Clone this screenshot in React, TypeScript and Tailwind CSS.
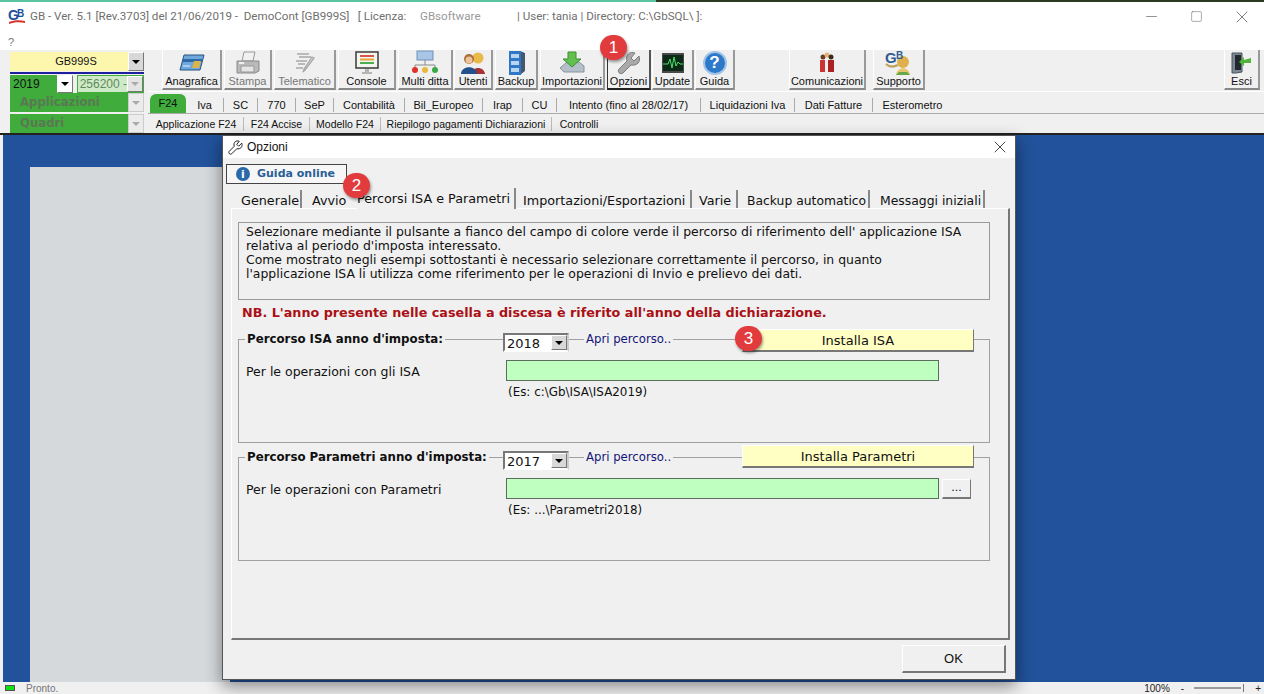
import { X, Minus, Square } from "lucide-react";

const ui = "font-['Liberation_Sans',Arial,sans-serif]";
const dlg = "font-['DejaVu_Sans',Verdana,sans-serif]";

function GbLogo() {
  return (
    <svg width="18" height="17" viewBox="0 0 18 17">
      <text x="0" y="12" fontFamily="Liberation Sans" fontWeight="700" fontSize="14" fill="#1d4f9c">G</text>
      <text x="9" y="9" fontFamily="Liberation Sans" fontWeight="700" fontSize="10" fill="#1d4f9c">B</text>
      <path d="M1 14 C6 12 12 12 17 13 L17 15 C12 14 6 14 1 16 Z" fill="#d8332a" />
    </svg>
  );
}

const icons: Record<string, React.ReactNode> = {
  Anagrafica: (
    <svg width="26" height="20" viewBox="0 0 26 20">
      <path d="M5 2 L25 2 L21 17 L1 17 Z" fill="#6fa8dc" stroke="#27527f" />
      <path d="M4 6 L24 6 L23 9 L3 9 Z" fill="#2f6aa8" />
      <path d="M15 8 L22 8 L20 15 L13 15 Z" fill="#d9b44a" />
      <path d="M4 13 H11" stroke="#e8f0fa" />
    </svg>
  ),
  Stampa: (
    <svg width="26" height="24" viewBox="0 0 26 24">
      <path d="M9 1 H20 L18 10 H7 Z" fill="#f1f1f1" stroke="#9a9a9a" />
      <path d="M2 10 H24 V20 L20 22 H2 Z" fill="#b9b9b9" stroke="#8a8a8a" />
      <path d="M6 15 H19 V21 H6 Z" fill="#e4e4e4" stroke="#999" />
      <path d="M4 12 H9" stroke="#eee" strokeWidth="2" />
    </svg>
  ),
  Telematico: (
    <svg width="24" height="24" viewBox="0 0 24 24" fill="none" stroke="#a8a8a8" strokeWidth="1.3">
      <path d="M4 3 H16 M6 6 H18 M3 10 H14 M5 13 H12 M3 17 H10" />
      <path d="M21 7 L12 19 L10 21 L11 18 L19 6 Z" fill="#ddd" />
    </svg>
  ),
  Console: (
    <svg width="24" height="24" viewBox="0 0 24 24">
      <rect x="1" y="1" width="22" height="16" fill="#f5f5ef" stroke="#3a3a3a" strokeWidth="1.5" />
      <path d="M5 5 H19" stroke="#d9534f" strokeWidth="2" />
      <path d="M5 8.5 H19" stroke="#e9a23b" strokeWidth="2" />
      <path d="M5 12 H19" stroke="#4caf50" strokeWidth="2" />
      <path d="M10 18 H14 V21 H10 Z M7 21 H17 V23 H7 Z" fill="#b5b5b5" />
    </svg>
  ),
  "Multi ditta": (
    <svg width="30" height="26" viewBox="0 0 30 26">
      <rect x="7" y="1" width="16" height="9" fill="#a9c6e8" stroke="#6f8fb5" />
      <path d="M15 10 V15 M5 20 V15 H25 V20" stroke="#8a8a8a" fill="none" />
      <circle cx="5" cy="20" r="3" fill="#e0302a" />
      <circle cx="15" cy="20" r="3" fill="#e8b93a" />
      <circle cx="25" cy="20" r="3" fill="#39a845" />
    </svg>
  ),
  Utenti: (
    <svg width="26" height="24" viewBox="0 0 26 24">
      <circle cx="18" cy="7" r="5.5" fill="#e9b949" />
      <path d="M12 23 C12 15 24 15 25 23 Z" fill="#a83232" />
      <circle cx="9" cy="8" r="5" fill="#a86f3d" />
      <circle cx="9" cy="9" r="3.5" fill="#eec39a" />
      <path d="M1 23 C1 14 17 14 17 23 Z" fill="#24508c" />
    </svg>
  ),
  Backup: (
    <svg width="22" height="26" viewBox="0 0 22 26">
      <path d="M4 1 H15 L20 3 V21 L15 25 H4 Z" fill="#47586e" />
      <rect x="4" y="1" width="12" height="24" fill="#2e78c7" />
      <rect x="6" y="4" width="8" height="4" fill="#b8d4ef" />
      <rect x="6" y="11" width="8" height="4" fill="#b8d4ef" />
      <rect x="6" y="18" width="8" height="4" fill="#b8d4ef" />
    </svg>
  ),
  Importazioni: (
    <svg width="26" height="24" viewBox="0 0 26 24">
      <path d="M1 17 L8 11 H20 L25 15 V21 H5 Z" fill="#b4bfca" stroke="#87929d" />
      <path d="M9 1 H17 V8 H22 L13 16 L4 8 H9 Z" fill="#63c04f" stroke="#3c8e32" />
    </svg>
  ),
  Opzioni: (
    <svg width="24" height="24" viewBox="0 0 24 24">
      <path d="M22 5 L17 10 L14 7 L18 2 C13 0 8 4 10 10 L2 18 C0 21 3 24 6 22 L14 14 C20 15 24 11 22 5 Z" fill="#a9a9a9" stroke="#7c7c7c" />
    </svg>
  ),
  Update: (
    <svg width="24" height="22" viewBox="0 0 24 22">
      <rect x="1" y="1" width="22" height="20" fill="#4a4a4a" />
      <rect x="2" y="3" width="20" height="16" fill="#0d2a16" />
      <path d="M2 12 H7 L9 7 L11 16 L13 5 L15 14 L17 10 L19 12 H22" fill="none" stroke="#47e26a" />
    </svg>
  ),
  Guida: (
    <div className="w-[24px] h-[24px] rounded-full bg-[#2c78c9] border-2 border-[#9ec3e8] flex items-center justify-center text-white font-bold text-[17px] leading-none">?</div>
  ),
  Comunicazioni: (
    <svg width="18" height="22" viewBox="0 0 18 22">
      <circle cx="5" cy="5" r="2.5" fill="#6b3a22" />
      <circle cx="9" cy="3" r="2.5" fill="#e3b26f" />
      <circle cx="13" cy="5" r="2.5" fill="#3b2a1d" />
      <path d="M2 8 H8 V20 H2 Z" fill="#c33" />
      <path d="M7 6 H11 V20 H7 Z" fill="#f0f0f0" />
      <path d="M10 8 H16 V20 H10 Z" fill="#a22" />
    </svg>
  ),
  Supporto: (
    <svg width="28" height="25" viewBox="0 0 28 25">
      <path d="M1 14 C5 18 9 17 13 15" stroke="#b9a25a" strokeWidth="2" fill="none" />
      <circle cx="18" cy="12" r="6" fill="#e0b04d" />
      <path d="M11 25 C12 16 24 16 25 25 Z" fill="#e7c66b" />
      <path d="M11 25 L14 22 H22 L25 25 Z" fill="#65a84c" />
      <text x="0" y="13" fontFamily="Liberation Sans" fontWeight="700" fontSize="15" fill="#2e5c93">G</text>
      <text x="11" y="9" fontFamily="Liberation Sans" fontWeight="700" fontSize="10" fill="#2e5c93">B</text>
    </svg>
  ),
  Esci: (
    <svg width="21" height="22" viewBox="0 0 21 22">
      <path d="M1 1 H11 V20 L5 21 H1 Z" fill="#7c8794" stroke="#4a5560" />
      <rect x="4" y="3" width="6" height="15" fill="#22282d" />
      <path d="M20 6 L20 11 L13 11 L13 14 L8 10 L13 5 L13 8 Z" fill="#53b43c" />
    </svg>
  ),
};

const tools = [
  { label: "Anagrafica", cls: "w-[60px] ml-[14px]" },
  { label: "Stampa", cls: "w-[48px] ml-[2px] text-[#777]" },
  { label: "Telematico", cls: "w-[62px] ml-[2px] text-[#777]" },
  { label: "Console", cls: "w-[58px] ml-[2px]" },
  { label: "Multi ditta", cls: "w-[55px] ml-[2px]" },
  { label: "Utenti", cls: "w-[39px] ml-[1px]" },
  { label: "Backup", cls: "w-[43px] ml-[2px]" },
  { label: "Importazioni", cls: "w-[65px] ml-[2px]" },
  { label: "Opzioni", cls: "w-[44px] ml-[2px] !border-l-[#333] !border-b-[#222] !border-r-[#555]" },
  { label: "Update", cls: "w-[42px] ml-[1px]" },
  { label: "Guida", cls: "w-[40px] ml-[1px]" },
  { label: "Comunicazioni", cls: "w-[77px] ml-[54px]" },
  { label: "Supporto", cls: "w-[52px] ml-[7px]" },
  { label: "Esci", cls: "w-[36px] ml-auto mr-[4px]" },
];

const tabsTop = [
  { t: "Iva", w: "w-[37px]" },
  { t: "SC", w: "w-[34px]" },
  { t: "770", w: "w-[38px]" },
  { t: "SeP", w: "w-[38px]" },
  { t: "Contabilità", w: "w-[71px]" },
  { t: "Bil_Europeo", w: "w-[78px]" },
  { t: "Irap", w: "w-[40px]" },
  { t: "CU", w: "w-[34px]" },
  { t: "Intento (fino al 28/02/17)", w: "w-[144px]" },
  { t: "Liquidazioni Iva", w: "w-[94px]" },
  { t: "Dati Fatture", w: "w-[78px]" },
  { t: "Esterometro", w: "w-[80px]" },
];

const tabsBottom = [
  { t: "Applicazione F24", w: "w-[94px]" },
  { t: "F24 Accise", w: "w-[66px]" },
  { t: "Modello F24", w: "w-[71px]" },
  { t: "Riepilogo pagamenti Dichiarazioni", w: "w-[171px]" },
  { t: "Controlli", w: "w-[55px]" },
];

function ToolButton({ label, cls }: { label: string; cls: string }) {
  return (
    <div className={`h-[40px] flex flex-col items-center bg-[#f0f0f0] border-l border-l-white border-r-2 border-r-[#999] border-b-2 border-b-[#888] ${cls}`}>
      <div className="h-[25px] flex items-center justify-center">{icons[label]}</div>
      <span className="text-[11px] leading-[12px] whitespace-nowrap">{label}</span>
    </div>
  );
}

function ArrowBox({ cls = "w-[16px]", muted = false }: { cls?: string; muted?: boolean }) {
  return (
    <div className={`h-full flex items-center justify-center border border-t-white border-l-white border-r-[#777] border-b-[#777] ${muted ? "bg-[#e4e4e4]" : "bg-[#d8d8d8]"} ${cls}`}>
      <div className={`w-0 h-0 border-l-[4px] border-r-[4px] border-t-[4px] border-l-transparent border-r-transparent ${muted ? "border-t-[#aaa]" : "border-t-black"}`} />
    </div>
  );
}

function GreenCombo({ label }: { label: string }) {
  return (
    <div className={`h-[19px] w-[134px] bg-[#3fac3c] flex items-center justify-between ${dlg}`}>
      <span className="pl-[10px] text-[11.7px] font-bold text-[#5a7853] whitespace-nowrap">{label}</span>
      <div className="h-full w-[16px] bg-[#ececec] border border-[#ccc] flex items-center justify-center">
        <div className="w-0 h-0 border-l-[4px] border-r-[4px] border-t-[4px] border-l-transparent border-r-transparent border-t-[#aaa]" />
      </div>
    </div>
  );
}

function YearCombo({ year }: { year: string }) {
  return (
    <div className="w-[66px] h-[19px] bg-white flex items-center justify-between border-2 border-t-[#777] border-l-[#777] border-r-[#ccc] border-b-white">
      <span className="pl-[2px] pt-[2px] text-[13px] leading-none">{year}</span>
      <ArrowBox cls="w-[16px]" />
    </div>
  );
}

function PathGroup(props: {
  cls: string; headCls: string; legend: string; year: string; button: string;
  legendCls: string; comboCls: string; apriCls: string; fieldCls: string;
  label: string; hint: string; browse?: boolean;
}) {
  return (
    <div className={`border border-[#a0a0a0] h-[104px] ${props.cls}`}>
      <div className={`flex items-start h-[23px] ${props.headCls}`}>
        <div className={`flex w-[264px] pl-[6px] ${props.legendCls}`}>
          <span className="bg-[#f0f0f0] px-[2px] text-[11.8px] leading-[16px] font-bold whitespace-nowrap">{props.legend}</span>
        </div>
        <div className={props.comboCls}><YearCombo year={props.year} /></div>
        <div className={`flex w-[173px] pl-[15px] ${props.apriCls}`}>
          <span className="bg-[#f0f0f0] px-[2px] text-[11.7px] leading-[14px] text-[#14147a] whitespace-nowrap">Apri percorso..</span>
        </div>
        <div className="w-[232px] h-[23px] pt-[1px] bg-[#ffffc4] flex items-center justify-center text-[13px] border border-t-white border-l-white border-r-[#777] border-b-2 border-b-[#777]">
          {props.button}
        </div>
      </div>
      <div className={`flex items-center pl-[7px] ${props.fieldCls}`}>
        <span className="w-[260px] pt-[3px] text-[12.5px] whitespace-nowrap">{props.label}</span>
        <div className="w-[433px] h-[21px] bg-[#bfffbf] border border-[#5d6d5d]" />
        {props.browse && (
          <div className="ml-[3px] w-[29px] h-[20px] flex items-center justify-center text-[11px] border border-t-white border-l-white border-r-[#777] border-b-2 border-b-[#777]">...</div>
        )}
      </div>
      <div className="mt-[3px] pl-[269px] text-[11.9px] leading-[14px]">{props.hint}</div>
    </div>
  );
}

function Badge({ n, cls }: { n: number; cls: string }) {
  return (
    <div className={`absolute w-[27px] h-[25px] rounded-full bg-[#e23b3e] text-white flex items-center justify-center text-[17px] shadow-[1px_2px_3px_rgba(0,0,0,0.4)] ${ui} ${cls}`}>
      {n}
    </div>
  );
}

function Dialog() {
  return (
    <div className={`absolute left-[222px] top-[135px] w-[794px] h-[545px] bg-[#f0f0f0] border border-[#555] shadow-[0_6px_16px_rgba(0,0,0,0.45)] text-[#111] ${dlg}`}>
      <div className="h-[22px] bg-white flex items-center">
        <svg className="ml-[4px]" width="17" height="15" viewBox="0 0 24 24" fill="none" stroke="#222" strokeWidth="1.6">
          <path d="M22 5 L17 10 L14 7 L18 2 C13 0 8 4 10 10 L2 18 C0 21 3 24 6 22 L14 14 C20 15 24 11 22 5 Z" />
        </svg>
        <span className={`ml-[3px] text-[12px] ${ui}`}>Opzioni</span>
        <X className="ml-auto mr-[5px]" size={20} strokeWidth={1} color="#222" />
      </div>
      <div className="ml-[3px] mt-[6px] w-[121px] h-[20px] bg-[#f6f6f6] border border-[#444] flex items-center">
        <div className="ml-[9px] w-[14px] h-[14px] rounded-full bg-[#2a6aa8] text-white text-[11px] font-bold flex items-center justify-center leading-none">i</div>
        <span className="ml-[7px] text-[11px] font-bold text-[#2a5f96] whitespace-nowrap">Guida online</span>
      </div>
      <div className="ml-[9px] mt-[5px] h-[19px] flex items-end text-[12.75px] whitespace-nowrap">
        <div className="w-[70px] h-[18px] pl-[9px] border-r-2 border-r-[#888] leading-[22px]">Generale</div>
        <div className="w-[55px] h-[18px] pl-[10px] leading-[22px]">Avvio</div>
        <div className="w-[159px] h-[21px] -mb-[1px] bg-[#f0f0f0] border-r-2 border-r-[#888] leading-[22px]">Percorsi ISA e Parametri</div>
        <div className="w-[176px] h-[18px] pl-[7px] border-r-2 border-r-[#888] leading-[22px]">Importazioni/Esportazioni</div>
        <div className="w-[46px] h-[18px] pl-[7px] border-r-2 border-r-[#888] leading-[22px]">Varie</div>
        <div className="w-[132px] h-[18px] pl-[9px] border-r-2 border-r-[#888] leading-[22px] text-[12.35px]">Backup automatico</div>
        <div className="w-[115px] h-[18px] pl-[10px] border-r-2 border-r-[#888] leading-[22px] text-[12.4px]">Messaggi iniziali</div>
      </div>
      <div className="ml-[8px] w-[779px] h-[432px] border-t border-l border-t-white border-l-white border-r-2 border-b-2 border-r-[#777] border-b-[#777]">
        <div className="ml-[6px] mt-[13px] w-[752px] h-[78px] border border-[#999] px-[7px] pt-[2px] text-[12.43px] leading-[14px] whitespace-nowrap">
          <p>Selezionare mediante il pulsante a fianco del campo di colore verde il percorso di riferimento dell' applicazione ISA</p>
          <p>relativa al periodo d'imposta interessato.</p>
          <p>Come mostrato negli esempi sottostanti è necessario selezionare correttamente il percorso, in quanto</p>
          <p>l'applicazione ISA li utilizza come riferimento per le operazioni di Invio e prelievo dei dati.</p>
        </div>
        <p className="ml-[10px] mt-[5px] text-[12.75px] leading-[16px] font-bold text-[#aa1016] whitespace-nowrap">
          NB. L'anno presente nelle casella a discesa è riferito all'anno della dichiarazione.
        </p>
        <PathGroup
          cls="ml-[6px] mt-[18px] w-[752px]"
          headCls="-mt-[11px]"
          legend="Percorso ISA anno d'imposta:"
          year="2018"
          button="Installa ISA"
          legendCls="mt-[2px]"
          comboCls="mt-[4px]"
          apriCls="mt-[3px]"
          fieldCls="mt-[8px]"
          label="Per le operazioni con gli ISA"
          hint="(Es: c:\Gb\ISA\ISA2019)"
        />
        <PathGroup
          cls="ml-[6px] mt-[14px] w-[752px]"
          headCls="-mt-[13px]"
          legend="Percorso Parametri anno d'imposta:"
          year="2017"
          button="Installa Parametri"
          legendCls="mt-[4px]"
          comboCls="mt-[6px]"
          apriCls="mt-[5px]"
          fieldCls="mt-[10px]"
          label="Per le operazioni con Parametri"
          hint="(Es: ...\Parametri2018)"
          browse
        />
      </div>
      <div className="mt-[5px] flex justify-end pr-[9px]">
        <div className={`w-[104px] h-[28px] flex items-center justify-center text-[13px] border border-t-white border-l-white border-r-2 border-r-[#777] border-b-2 border-b-[#777] ${ui}`}>OK</div>
      </div>
    </div>
  );
}

export default function App() {
  return (
    <div className={`relative w-[1264px] h-[694px] overflow-hidden flex flex-col bg-[#f0f0f0] text-[#111] ${ui}`}>
      <div className="h-[2px] flex shrink-0">
        <div className="w-[656px] bg-[#5cc3a2]" />
        <div className="flex-1 bg-[#2c3a22]" />
      </div>
      {/* title + menu */}
      <div className="h-[32px] shrink-0 pb-[3px] bg-white flex items-center text-[11.6px] text-[#6f6f6f] whitespace-pre font-['Roboto',sans-serif]">
        <div className="ml-[8px] mr-[4px] flex"><GbLogo /></div>
        <span className="w-[390px]">GB - Ver. 5.1 [Rev.3703] del 21/06/2019 -  DemoCont [GB999S]   [ Licenza:</span>
        <span className="w-[97px] text-[#999]">GBsoftware</span>
        <span>| User: tania | Directory: C:\GbSQL\ ]:</span>
        <Minus className="ml-auto" size={17} strokeWidth={1} color="#666" />
        <Square className="ml-[30px]" size={13} strokeWidth={1} color="#666" />
        <X className="ml-[29px] mr-[12px]" size={20} strokeWidth={1} color="#666" />
      </div>
      <div className="h-[16px] shrink-0 bg-white pl-[8px] text-[11px] leading-[16px] text-[#777]">?</div>

      {/* toolbar area */}
      <div className="h-[85px] shrink-0 flex border-b-2 border-b-[#222]">
        <div className="w-[148px] shrink-0 pl-[10px] pt-[2px]">
          <div className="w-[134px] h-[19px] flex items-center bg-[#fdf7ae] text-[11px]">
            <span className="flex-1 text-center pl-[14px]">GB999S</span>
            <ArrowBox />
          </div>
          <div className="w-[134px] h-[2px] mt-[1px] bg-[#1c1f9e]" />
          <div className="w-[134px] h-[18px] mt-[1px] flex text-[12px]">
            <div className="w-[64px] bg-[#3fac3c] flex items-center justify-between">
              <span className="pl-[3px]">2019</span>
              <ArrowBox cls="w-[16px] bg-white" />
            </div>
            <div className="ml-[4px] flex-1 bg-[#cfeac9] border border-[#3fac3c] flex items-center justify-between text-[#5e8a5a]">
              <span className="pl-[2px] whitespace-nowrap overflow-hidden">256200 -</span>
              <ArrowBox cls="w-[16px] shrink-0" muted />
            </div>
          </div>
          <GreenCombo label="Applicazioni" />
          <div className="mt-[2px]"><GreenCombo label="Quadri" /></div>
        </div>
        <div className="flex-1 flex flex-col">
          <div className="h-[42px] flex border-b border-b-white">
            {tools.map((t) => <ToolButton key={t.label} label={t.label} cls={t.cls} />)}
          </div>
          <div className="h-[21px] mt-[1px] flex items-end text-[11px] border-b border-b-[#aaa]">
            <div className="ml-[2px] w-[36px] h-[19px] bg-[#3fac3c] rounded-t-[6px] flex items-center justify-center">F24</div>
            {tabsTop.map((item, i) => (
              <div key={item.t} className={`h-[14px] mb-[1px] text-center leading-[14px] whitespace-nowrap ${item.w} ${i ? "border-l border-l-[#aaa]" : ""}`}>{item.t}</div>
            ))}
          </div>
          <div className="h-[19px] pl-[1px] flex items-center text-[10.5px]">
            {tabsBottom.map((item, i) => (
              <div key={item.t} className={`h-[14px] text-center leading-[14px] whitespace-nowrap ${item.w} ${i ? "border-l border-l-[#bbb]" : ""}`}>{item.t}</div>
            ))}
          </div>
        </div>
      </div>

      {/* mdi area */}
      <div className="flex-1 ml-[3px] pl-[27px] pt-[32px] bg-[#21529b]">
        <div className="w-[200px] h-full bg-[#d6d9dc]" />
      </div>

      {/* status bar */}
      <div className="h-[12px] shrink-0 flex items-center text-[10px] text-[#777] bg-[#f0f0f0]">
        <div className="ml-[5px] w-[10px] h-[6px] bg-[#12e012] border border-[#555]" />
        <span className="ml-[11px]">Pronto.</span>
        <span className="ml-auto text-[#222]">100%</span>
        <span className="ml-[11px] text-[#222]">-</span>
        <div className="ml-[10px] w-[47px] h-[2px] bg-[#999]" />
        <div className="ml-[2px] w-[1px] h-[8px] bg-[#777]" />
        <span className="ml-[11px] mr-[3px] text-[#222]">+</span>
      </div>

      <Dialog />
      <Badge n={1} cls="left-[600px] top-[35px]" />
      <Badge n={2} cls="left-[343px] top-[173px]" />
      <Badge n={3} cls="left-[735px] top-[326px]" />
    </div>
  );
}
